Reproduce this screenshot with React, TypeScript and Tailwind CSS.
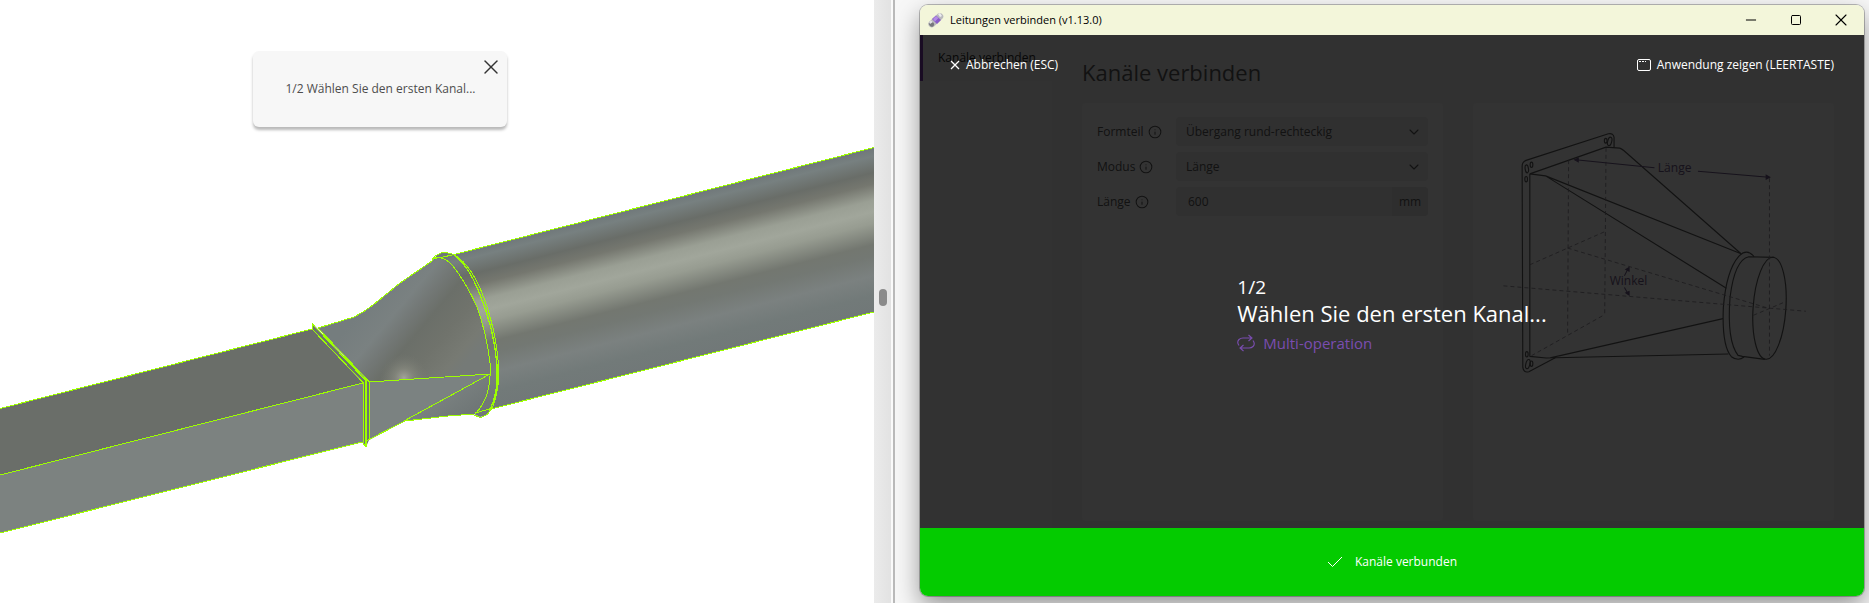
import type { ReactNode } from "react";
import { ChevronDown, Info, Minus, Square, X } from "lucide-react";

const EDGE = "#9dff00";

function DuctModel() {
  return (
    <svg
      className="absolute inset-0 h-full w-full"
      viewBox="0 0 874 603"
      preserveAspectRatio="xMinYMin slice"
      aria-hidden="true"
    >
      <defs>
        <linearGradient id="pipe" gradientUnits="userSpaceOnUse" x1="873" y1="148" x2="912" y2="302">
          <stop offset="0" stopColor="#70787a" />
          <stop offset="0.05" stopColor="#778080" />
          <stop offset="0.15" stopColor="#696d68" />
          <stop offset="0.22" stopColor="#75776f" />
          <stop offset="0.32" stopColor="#9a9f94" />
          <stop offset="0.39" stopColor="#a1a69b" />
          <stop offset="0.46" stopColor="#979c91" />
          <stop offset="0.59" stopColor="#737770" />
          <stop offset="0.66" stopColor="#737873" />
          <stop offset="0.78" stopColor="#7b8180" />
          <stop offset="0.9" stopColor="#727a79" />
          <stop offset="1" stopColor="#717878" />
        </linearGradient>
        <linearGradient id="loft" gradientUnits="userSpaceOnUse" x1="368" y1="303" x2="455" y2="376">
          <stop offset="0" stopColor="#757d7e" />
          <stop offset="0.24" stopColor="#7a8181" />
          <stop offset="0.36" stopColor="#737876" />
          <stop offset="0.5" stopColor="#6b6f69" />
          <stop offset="0.7" stopColor="#70736c" />
          <stop offset="0.9" stopColor="#777a73" />
          <stop offset="1" stopColor="#757a77" />
        </linearGradient>
        <radialGradient id="glint" gradientUnits="userSpaceOnUse" cx="404" cy="378" r="24">
          <stop offset="0" stopColor="#a4a59a" />
          <stop offset="0.4" stopColor="#8c8e83" stopOpacity="0.6" />
          <stop offset="1" stopColor="#787b73" stopOpacity="0" />
        </radialGradient>
        <linearGradient id="facet" gradientUnits="userSpaceOnUse" x1="440" y1="390" x2="460" y2="418">
          <stop offset="0" stopColor="#7c8382" />
          <stop offset="1" stopColor="#707777" />
        </linearGradient>
      </defs>

      <path d="M0 408.5 312 329 363 383 0 475Z" fill="#6a6e69" />
      <path d="M0 475 363 383V442L0 533Z" fill="#7c8280" />
      <path
        d="M432 261 437 255 442 252.5 448 253 454 254.5 874 147.5V312L491 409 487 415 480 417 474 414Z"
        fill="url(#pipe)"
      />
      <path
        d="M318 328 354 317Q364 312 373 305L400 283 432 261Q440 256 448 262 462 273 477 307 487 335 490 363V376Q489 400 475 414L448 416 405 421 369 440V382Z"
        fill="url(#loft)"
      />
      <path d="M376 382V350H436V378Z" fill="url(#glint)" />
      <path d="M369 382 490 374 404 421 369 440Z" fill="#7b8281" />
      <path d="M490 374Q489 400 475 414L448 416 404 421Z" fill="url(#facet)" />
      <path d="M312 323 369 382V440L366 447 363 442V383L312 329Z" fill="#6d736e" />

      <g fill="none" stroke={EDGE} strokeWidth="1" shapeRendering="crispEdges">
        <path d="M0 408.5 312 329M0 475 363 383M0 533 362 442" />
        <path d="M312 323.5V329L363.5 383V442M312 323.5 366 381M318 328 369.5 382V440M316 328 367 381M318 328 354 317Q364 312 373 305L400 283 432 261" />
        <path d="M366 381V447" strokeWidth="2" />
        <path d="M362 442 366 447M366 441 405 421 448 416 474 414" />
        <path d="M369 382 490 374 404 421" />
        <path d="M432 261 435 256 442 252.5 448 253 454 254.5Q473 266 485 301 496 332 498 360V385Q495 406 490 411 487 416 480 417.5L472 414" />
        <path d="M432 259 443 257 452 255M434 258Q444 256 452 265 466 282 477 307 487 335 490 363V376Q489 400 475 414M475 413 493 408" />
        <path d="M454 255Q468 265 479 292 494 328 497 365V385Q494 404 489 411" strokeWidth="1.3" />
        <path d="M454 254.5 874 147.5M491 409 874 312" />
      </g>
    </svg>
  );
}

function FittingSketch() {
  return (
    <svg className="block w-full" viewBox="39 -21 1080 900" role="img" aria-label="Übergang rund-rechteckig">
      <g fill="none" stroke="#5a5a5a" strokeWidth="3.4" strokeLinejoin="round">
        <path d="M461 113V82Q459 68 444 71L200 150Q186 155 186 168L188 770Q190 787 206 783L285 741" />
        <path d="M209 191 437 111 478 114Q484 116 490 121L841 430M209 191V737L258 742 285 741 803 730M209 191 256 197 841 430M256 197 797 533M270 741 303 734 787 624" />
        <ellipse cx="200" cy="176" rx="5" ry="12" transform="rotate(-8 200 176)" />
        <ellipse cx="214" cy="164" rx="4" ry="8" />
        <ellipse cx="198" cy="207" rx="4" ry="8" />
        <ellipse cx="448" cy="94" rx="6" ry="13" transform="rotate(14 448 94)" />
        <ellipse cx="436" cy="92" rx="4" ry="7" />
        <ellipse cx="200" cy="731" rx="4" ry="8" />
        <ellipse cx="203" cy="760" rx="6" ry="14" transform="rotate(14 203 760)" />
        <ellipse cx="214" cy="759" rx="4" ry="8" />
        <path d="M880 439Q858 412 834 438 797 480 788 590 783 705 812 738 832 753 850 739" />
        <path d="M940 441 864 439Q822 448 808 560 798 690 832 734L845 737 912 746" />
        <ellipse cx="926" cy="593" rx="49" ry="153" transform="rotate(4 926 593)" />
      </g>
      <g fill="none" stroke="#8a8390" strokeWidth="2.4" strokeDasharray="12 9">
        <path d="M325 150 322 673M437 113 433 612M209 463 433 364M214 735 433 612M130 526 1035 602M322 413 926 594M878 614 975 573M926 204V735" />
      </g>
      <g stroke="#705a88" strokeWidth="3" fill="#705a88">
        <path d="M346 149 582 173M712 183 924 201M492 496 503 475M492 531 503 550" />
        <path d="M343 149 354 144V155ZM927 201 916 195V207ZM506 471 496 477 506 482ZM506 554 496 547 506 543Z" />
      </g>
      <g fill="#705a88" fontSize="36" className="font-['Open_Sans',sans-serif]">
        <text x="592" y="185">Länge</text>
        <text x="448" y="524">Winkel</text>
      </g>
    </svg>
  );
}

function AppIcon() {
  return (
    <svg className="size-4" viewBox="0 0 16 16" aria-hidden="true">
      <path d="M1 10 10 1.5Q13 0 15 3 16 5 14.5 6.5L6 14.5Q3 16.5 1 14 -0.5 12 1 10Z" fill="#b9b9bd" />
      <path d="M4 7 8 3.5 13 8 9 12Z" fill="#8a5cc8" />
      <path d="M5 7 8 4 10.5 6 7 9.5Z" fill="#b38be6" />
      <path d="M10 2 12 1 14 4 12 5Z" fill="#ececef" />
      <ellipse cx="3.5" cy="12" rx="2.3" ry="2.8" fill="#77777c" transform="rotate(-40 3.5 12)" />
      <path d="M1 10 3 8.5 5 10 2 12Z" fill="#e2e2e6" />
    </svg>
  );
}

function Field({ id, label, children }: { id: string; label: string; children: ReactNode }) {
  return (
    <div className="flex items-center">
      <label htmlFor={id} className="flex w-[79px] shrink-0 items-center gap-1 text-xs">
        {label}
        <Info className="size-3.5" strokeWidth={1.8} />
      </label>
      <div className="relative flex h-[29px] min-w-0 flex-1 items-center rounded bg-[#ededed]">{children}</div>
    </div>
  );
}

function SelectField({ id, label, value }: { id: string; label: string; value: string }) {
  return (
    <Field id={id} label={label}>
      <select id={id} className="h-full w-full appearance-none bg-transparent px-2.5 text-xs">
        <option>{value}</option>
      </select>
      <ChevronDown className="pointer-events-none absolute right-1.5 size-4" strokeWidth={1.6} />
    </Field>
  );
}

function ConnectForm() {
  return (
    <div className="flex flex-1 bg-[#f5f5f5] text-[#5c5c5c]">
      <nav className="w-[132px] shrink-0 bg-[#f9f9f9]">
        <a
          href="#verbinden"
          className="flex h-[46px] items-center border-l-3 border-[#7c3fb0] bg-[#f3f3f3] pl-[15px] text-xs whitespace-nowrap text-[#1f1f1f]"
        >
          Kanäle verbinden
        </a>
      </nav>
      <div className="flex min-w-0 flex-1 flex-col px-[30px] pt-5 pb-[7px]">
        <h1 className="text-[22px] leading-[34px]">Kanäle verbinden</h1>
        <div className="mt-3.5 grid flex-1 grid-cols-2 gap-[30px]">
          <section className="flex flex-col gap-1.5 rounded bg-[#fcfcfc] px-[15px] pt-3.5">
            <SelectField id="formteil" label="Formteil" value="Übergang rund-rechteckig" />
            <SelectField id="modus" label="Modus" value="Länge" />
            <Field id="laenge" label="Länge">
              <input id="laenge" defaultValue="600" className="h-full min-w-0 flex-1 bg-transparent px-3 text-xs" />
              <span className="flex h-full w-9 items-center justify-center rounded-r bg-[#e3e3e3] text-xs">mm</span>
            </Field>
          </section>
          <section className="rounded bg-[#fcfcfc]">
            <FittingSketch />
          </section>
        </div>
      </div>
    </div>
  );
}

function PickOverlay() {
  return (
    <div className="absolute inset-0 flex flex-col bg-black/80 text-white">
      <div className="flex items-center justify-between px-[30px] pt-5 text-xs">
        <button className="flex items-center gap-1.5 leading-5">
          <svg className="size-2.5" viewBox="0 0 10 10" stroke="currentColor" strokeWidth="1.3" aria-hidden="true">
            <path d="M1 1 9 9M9 1 1 9" />
          </svg>
          Abbrechen (ESC)
        </button>
        <button className="flex items-center gap-1.5 leading-5">
          <svg className="size-3.5" viewBox="0 0 14 14" fill="none" stroke="currentColor" aria-hidden="true">
            <rect x="0.5" y="1.5" width="13" height="11" rx="1.5" />
            <path d="M2 3.5H9" strokeDasharray="2 1" />
          </svg>
          Anwendung zeigen (LEERTASTE)
        </button>
      </div>
      <div className="flex flex-1 items-center justify-center pt-[26px]">
        <div>
          <p className="text-[19px] leading-6">1/2</p>
          <p className="text-[22px] leading-7">Wählen Sie den ersten Kanal...</p>
          <p className="mt-1 flex items-center gap-2 text-[15px] leading-6 text-[#7a4db0]">
            <svg
              className="size-[18px]"
              viewBox="0 0 18 18"
              fill="none"
              stroke="currentColor"
              strokeWidth="1.1"
              aria-hidden="true"
            >
              <path d="M2 11.5Q-0.500 8 2 5.500 3.500 4 6 4H15M11.500 1 15 4 11.500 7M16 6.500Q18.500 10 16 12.500 14.500 14 12 14H3M6.500 11 3 14 6.500 17" />
            </svg>
            Multi-operation
          </p>
        </div>
      </div>
    </div>
  );
}

export default function App() {
  return (
    <div className="flex min-h-screen bg-white font-['Open_Sans','Noto_Sans',sans-serif]">
      <main className="relative min-w-0 flex-[874] overflow-hidden bg-white">
        <DuctModel />
        <div
          role="status"
          className="relative mt-[51px] ml-[29%] flex h-[76px] w-[254px] items-center justify-center rounded-md bg-[#f7f7f7] text-xs text-[#4d4d4d] shadow-[0_3px_3px_rgba(0,0,0,0.28)]"
        >
          1/2 Wählen Sie den ersten Kanal...
          <button aria-label="Schließen" className="absolute top-1 right-1 text-[#333]">
            <X className="size-6" strokeWidth={1.4} />
          </button>
        </div>
      </main>

      <div className="flex w-[17px] shrink-0 items-center justify-center bg-linear-to-r from-[#ebebeb] to-[#e2e2e2] pb-2">
        <div className="h-[17px] w-2 rounded-sm bg-[#8a8a8a]" />
      </div>
      <div className="w-1 shrink-0 border-r-2 border-[#b9b9b9] bg-[#fafafa]" />

      <div className="flex min-w-0 flex-[974] overflow-hidden bg-[#f7f7f7]">
        <div className="flex min-w-0 flex-1 pt-[5px] pr-[5px] pb-[7px] pl-[25px]">
          <section className="flex min-w-0 flex-1 flex-col overflow-hidden rounded-lg shadow-[0_0_0_1px_rgba(0,0,0,0.25),0_10px_24px_rgba(0,0,0,0.4)]">
            <header className="flex h-[30px] shrink-0 items-center gap-1.5 bg-[#f3f6da] pl-2 text-[11px] text-black">
              <AppIcon />
              <span className="flex-1">Leitungen verbinden (v1.13.0)</span>
              <button aria-label="Minimieren" className="flex h-full w-[45px] items-center justify-center">
                <Minus className="size-4" strokeWidth={1.5} />
              </button>
              <button aria-label="Maximieren" className="-ml-1.5 flex h-full w-[45px] items-center justify-center">
                <Square className="size-3" strokeWidth={2} />
              </button>
              <button aria-label="Fenster schließen" className="-ml-1.5 flex h-full w-[46px] items-center justify-center">
                <X className="size-5" strokeWidth={1.3} />
              </button>
            </header>
            <div className="relative flex flex-1 flex-col">
              <ConnectForm />
              <PickOverlay />
            </div>
            <footer className="flex h-[68px] shrink-0 items-center justify-center gap-3 bg-[#04cb00] text-xs text-white">
              <svg className="h-3 w-4" viewBox="0 0 16 12" fill="none" stroke="currentColor" aria-hidden="true">
                <path d="M1 6 5.5 10.5 15 1" />
              </svg>
              Kanäle verbunden
            </footer>
          </section>
        </div>
      </div>
    </div>
  );
}
